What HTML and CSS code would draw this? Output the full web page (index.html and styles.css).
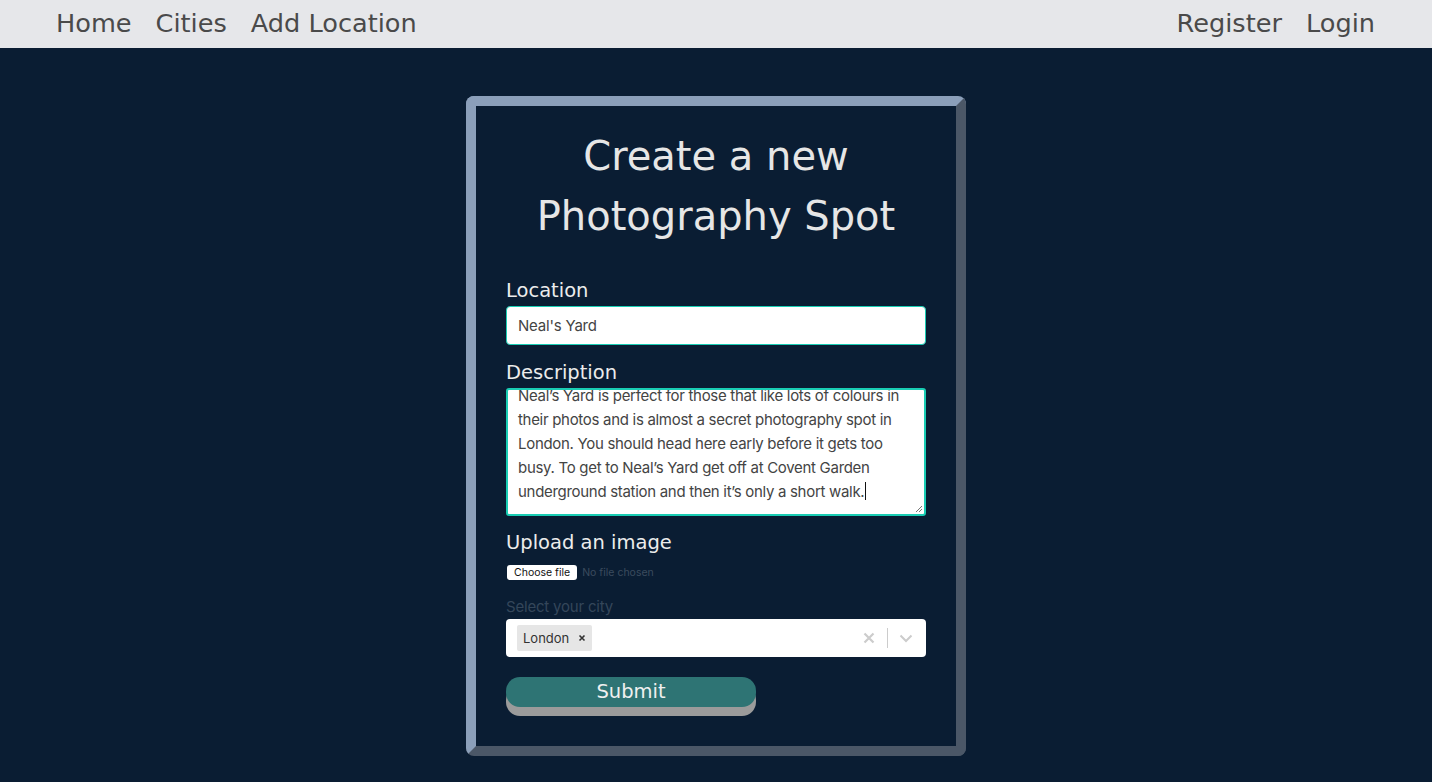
FILE: index.html
```html
<!DOCTYPE html>
<html lang="en">
<head>
<meta charset="utf-8">
<title>Create a new Photography Spot</title>
<link rel="stylesheet" href="styles.css">
</head>
<body>
<nav class="navbar">
  <div class="nav-left">
    <a class="nav-link" href="#">Home</a>
    <a class="nav-link" href="#">Cities</a>
    <a class="nav-link" href="#">Add Location</a>
  </div>
  <div class="nav-right">
    <a class="nav-link" href="#">Register</a>
    <a class="nav-link" href="#">Login</a>
  </div>
</nav>
<main class="page">
  <section class="card">
    <h1 class="title">Create a new<br>Photography Spot</h1>
    <form class="form">
      <label class="label">Location</label>
      <div class="input">Neal's Yard</div>
      <label class="label label-desc">Description</label>
      <div class="textarea">
        <div class="textarea-text">Neal’s Yard is perfect for those that like lots of colours in<br>their photos and is almost a secret photography spot in<br>London. You should head here early before it gets too<br>busy. To get to Neal’s Yard get off at Covent Garden<br>underground station and then it’s only a short walk.<span class="caret"></span></div>
        <svg class="grip" width="8" height="8" viewBox="0 0 8 8"><path d="M7 1 L1 7 M7 4 L4 7" stroke="#777" stroke-width="1"/></svg>
      </div>
      <label class="label label-upload">Upload an image</label>
      <div class="file">
        <span class="file-btn">Choose file</span>
        <span class="file-none">No file chosen</span>
      </div>
      <div class="select-label">Select your city</div>
      <div class="select">
        <div class="select-values">
          <span class="chip"><span class="chip-text">London</span><span class="chip-x">
            <svg width="8" height="8" viewBox="0 0 8 8"><path d="M1.5 1.5 L6.5 6.5 M6.5 1.5 L1.5 6.5" stroke="#333" stroke-width="1.6"/></svg>
          </span></span>
        </div>
        <div class="select-indicators">
          <svg class="ind" width="20" height="20" viewBox="0 0 20 20"><path d="M5.5 5.5 L14.5 14.5 M14.5 5.5 L5.5 14.5" stroke="#ccc" stroke-width="2.2"/></svg>
          <span class="sep"></span>
          <svg class="ind" width="20" height="20" viewBox="0 0 20 20"><path d="M4.5 7.5 L10 13 L15.5 7.5" fill="none" stroke="#ccc" stroke-width="2"/></svg>
        </div>
      </div>
      <button class="submit" type="button">Submit</button>
    </form>
  </section>
</main>
</body>
</html>
```
FILE: styles.css
```css
* { box-sizing: border-box; }
html, body { margin: 0; padding: 0; }
body {
  background: #0a1d33;
  font-family: "DejaVu Sans", sans-serif;
  min-height: 782px;
}
.navbar {
  height: 48px;
  background: #e6e7ea;
  display: flex;
  justify-content: space-between;
  align-items: center;
  padding: 0 45px 2px 44px;
}
.nav-left, .nav-right { display: flex; }
.nav-link {
  color: #4a4a4a;
  text-decoration: none;
  font-size: 25.6px;
  padding: 0 12px;
}
.page {
  display: flex;
  justify-content: center;
  padding-top: 48px;
}
.card {
  width: 500px;
  height: 660px;
  border: 10px solid;
  border-color: #8b9fba #4b5767 #4b5767 #8b9fba;
  border-radius: 8px;
  padding: 20px 30px 30px;
  background: #0a1d33;
}
.title {
  margin: 0;
  text-align: center;
  color: #e6e6e6;
  font-weight: normal;
  font-size: 40px;
  line-height: 60px;
}
.form {
  display: flex;
  flex-direction: column;
  margin-top: 33px;
}
.label {
  color: #ececec;
  font-size: 19.5px;
  line-height: 24px;
  margin-bottom: 3px;
}
.label-desc { margin-top: 16px; }
.label-upload { margin-top: 15px; }
.input {
  height: 39px;
  background: #fff;
  border: 1.5px solid #19cdb4;
  border-radius: 4px;
  padding: 0 11px;
  display: flex;
  align-items: center;
  font-family: "Inter", "Liberation Sans", sans-serif;
  font-size: 15px;
  color: #444;
  letter-spacing: -0.2px;
}
.textarea {
  position: relative;
  height: 128px;
  background: #fff;
  border: 2px solid #19cdb4;
  border-radius: 3px;
  overflow: hidden;
  padding: 0 10px;
}
.textarea-text {
  margin-top: -6px;
  font-family: "Inter", "Liberation Sans", sans-serif;
  font-size: 15px;
  line-height: 24px;
  color: #444;
  white-space: nowrap;
  letter-spacing: -0.3px;
}
.caret {
  display: inline-block;
  width: 1px;
  height: 18px;
  background: #111;
  vertical-align: -3px;
  margin-left: 1px;
}
.grip {
  position: absolute;
  right: 1px;
  bottom: 1px;
}
.file {
  display: flex;
  align-items: center;
  margin-top: 7px;
  height: 15px;
  font-family: "Inter", "Liberation Sans", sans-serif;
  font-size: 11px;
}
.file-btn {
  background: #fff;
  color: #111;
  border-radius: 3px;
  height: 15px;
  line-height: 15px;
  padding: 0 7px;
  margin-left: 1px;
  font-size: 10.5px;
}
.file-none {
  color: #3b4b5e;
  margin-left: 5px;
  font-size: 10.5px;
}
.select-label {
  margin-top: 18px;
  font-family: "Inter", "Liberation Sans", sans-serif;
  font-size: 15px;
  line-height: 18px;
  color: #34465a;
  letter-spacing: -0.2px;
}
.select {
  margin-top: 3px;
  height: 38px;
  background: #fff;
  border-radius: 4px;
  display: flex;
  align-items: center;
  justify-content: space-between;
  padding: 0 6px 0 11px;
}
.select-values { display: flex; }
.chip {
  display: flex;
  align-items: center;
  background: #e6e6e6;
  border-radius: 2px;
  height: 26px;
  padding: 0 6px;
  font-family: "Inter", "Liberation Sans", sans-serif;
  font-size: 13px;
  color: #333;
}
.chip-text { margin-right: 9px; }
.chip-x { display: flex; align-items: center; }
.select-indicators {
  display: flex;
  align-items: center;
}
.ind { margin: 0 4px; }
.sep {
  width: 1px;
  height: 20px;
  background: #ccc;
  margin: 0 4px;
}
.submit {
  margin-top: 20px;
  width: 250px;
  height: 30px;
  border: none;
  border-radius: 14px;
  background: #2e7474;
  box-shadow: 0 9px 0 #9b9b9b;
  color: #f0f0f0;
  font-family: "DejaVu Sans", sans-serif;
  font-size: 19.5px;
  padding: 0;
  line-height: 30px;
  cursor: pointer;
}
```
